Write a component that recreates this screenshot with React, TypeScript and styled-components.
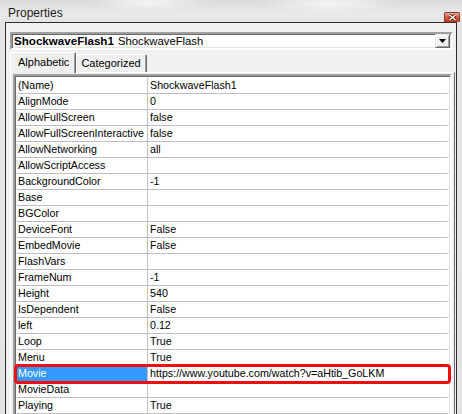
import React from 'react';
import styled, { createGlobalStyle } from 'styled-components';

interface Property {
  name: string;
  value: string;
}

const properties: Property[] = [
  { name: '(Name)', value: 'ShockwaveFlash1' },
  { name: 'AlignMode', value: '0' },
  { name: 'AllowFullScreen', value: 'false' },
  { name: 'AllowFullScreenInteractive', value: 'false' },
  { name: 'AllowNetworking', value: 'all' },
  { name: 'AllowScriptAccess', value: '' },
  { name: 'BackgroundColor', value: '-1' },
  { name: 'Base', value: '' },
  { name: 'BGColor', value: '' },
  { name: 'DeviceFont', value: 'False' },
  { name: 'EmbedMovie', value: 'False' },
  { name: 'FlashVars', value: '' },
  { name: 'FrameNum', value: '-1' },
  { name: 'Height', value: '540' },
  { name: 'IsDependent', value: 'False' },
  { name: 'left', value: '0.12' },
  { name: 'Loop', value: 'True' },
  { name: 'Menu', value: 'True' },
  { name: 'Movie', value: 'https://www.youtube.com/watch?v=aHtib_GoLKM' },
  { name: 'MovieData', value: '' },
  { name: 'Playing', value: 'True' },
];

const GlobalStyle = createGlobalStyle`
  html, body {
    margin: 0;
    padding: 0;
    background: #e3e3e3;
  }
  body {
    font-family: "Liberation Sans", Arial, sans-serif;
    font-size: 11px;
    color: #000;
  }
`;

const Window = styled.div`
  width: 462px;
  height: 414px;
  overflow: hidden;
  display: flex;
  flex-direction: column;
  padding: 0 5px 0 5px;
  box-sizing: border-box;
  background:
    radial-gradient(ellipse 60px 10px at 150px 2px, rgba(255, 255, 255, 0.7), transparent),
    radial-gradient(ellipse 70px 10px at 330px 3px, rgba(255, 255, 255, 0.7), transparent),
    linear-gradient(#dadada 0px, #e9e9e9 14px, #e4e4e4 22px, #e3e3e3 100%);
`;

const TitleBar = styled.div`
  height: 22px;
  flex: none;
  display: flex;
  justify-content: space-between;
  padding-left: 3px;
  margin-right: -3px;
`;

const Title = styled.span`
  font-size: 12px;
  line-height: 12px;
  padding-top: 7px;
  color: #1e1e1e;
`;

const CloseButton = styled.div`
  align-self: flex-end;
  width: 16px;
  height: 10px;
  box-sizing: border-box;
  border: 1px solid #8c3a2a;
  border-bottom: none;
  border-radius: 2px 2px 0 0;
  background: linear-gradient(#eaa898, #d35a40 50%, #c23a20);
  display: flex;
  align-items: center;
  justify-content: center;
`;

const Panel = styled.div`
  flex: 1;
  border: 1px solid #2e2e2e;
  border-bottom: none;
  background: #f0f0f0;
  padding: 9px 3px 0 4px;
  display: flex;
  flex-direction: column;
`;

const Combo = styled.div`
  height: 18px;
  box-sizing: border-box;
  border-style: solid;
  border-width: 2px;
  border-color: #a0a0a0 #fff #fff #a0a0a0;
  box-shadow: inset 1px 1px 0 #696969, inset -1px -1px 0 #e3e3e3;
  background: #fff;
  display: flex;
  align-items: center;
  padding-left: 2px;
  padding-right: 1px;
`;

const ComboText = styled.span`
  flex: 1;
  white-space: nowrap;
  line-height: 14px;
  font-size: 11.3px;
  b {
    font-weight: bold;
    font-size: 11.6px;
    margin-right: 4px;
  }
`;

const DropButton = styled.div`
  width: 15px;
  height: 14px;
  box-sizing: border-box;
  background: #f0f0f0;
  border-style: solid;
  border-width: 1px;
  border-color: #e3e3e3 #696969 #696969 #e3e3e3;
  box-shadow: inset 1px 1px 0 #fff, inset -1px -1px 0 #a0a0a0;
  display: flex;
  align-items: center;
  justify-content: center;
`;

const TabStrip = styled.div`
  display: flex;
  align-items: flex-end;
  margin-top: 2px;
  height: 20px;
  position: relative;
  z-index: 1;
`;

const Tab = styled.div<{ $active?: boolean }>`
  box-sizing: border-box;
  height: ${p => (p.$active ? 21 : 18)}px;
  margin-bottom: ${p => (p.$active ? -1 : 0)}px;
  padding: ${p => (p.$active ? '3px 6px 0 7px' : '2px 5px 0 4px')};
  background: #f0f0f0;
  border-style: solid;
  border-width: 1px 1px 0 1px;
  border-color: #fff #696969 transparent #fff;
  box-shadow: inset -1px 0 0 #a0a0a0;
  border-radius: 2px 2px 0 0;
  white-space: nowrap;
  line-height: 13px;
`;

const TabPage = styled.div`
  flex: 1;
  margin-right: -2px;
  border-style: solid;
  border-width: 1px 1px 0 1px;
  border-color: #fff #696969 transparent #fff;
  padding: 1px 2px 0 2px;
  display: flex;
  flex-direction: column;
`;

const Grid = styled.div`
  flex: 1;
  border-style: solid;
  border-width: 2px 2px 0 2px;
  border-color: #a0a0a0 #fff transparent #a0a0a0;
  box-shadow: inset 1px 1px 0 #696969, inset -1px 0 0 #e3e3e3;
  background: #fff;
  padding: 2px 1px 0 1px;
  font-size: 10.7px;
`;

const Row = styled.div<{ $marked?: boolean }>`
  display: grid;
  grid-template-columns: 132px 1fr;
  height: 16px;
  box-sizing: border-box;
  border-bottom: 1px solid #c0c0c0;
  position: relative;
  outline: ${p => (p.$marked ? '3px solid #f20d0d' : 'none')};
  outline-offset: -1px;
  border-radius: 2px;
  z-index: ${p => (p.$marked ? 1 : 0)};
`;

const NameCell = styled.div<{ $selected?: boolean }>`
  border-right: 1px solid #c0c0c0;
  padding-left: 2px;
  line-height: 15px;
  white-space: nowrap;
  overflow: hidden;
  background: ${p => (p.$selected ? '#3399ff' : '#fff')};
  color: ${p => (p.$selected ? '#fff' : '#000')};
`;

const ValueCell = styled.div`
  padding-left: 2px;
  line-height: 15px;
  white-space: nowrap;
  overflow: hidden;
`;

export default function App() {
  return (
    <>
      <GlobalStyle />
      <Window>
        <TitleBar>
          <Title>Properties</Title>
          <CloseButton>
            <svg width="9" height="7" viewBox="0 0 9 7">
              <path d="M1.5 1 L7.5 6 M7.5 1 L1.5 6" stroke="#5a1a10" strokeWidth="3" />
              <path d="M1.5 1 L7.5 6 M7.5 1 L1.5 6" stroke="#fff" strokeWidth="1.5" />
            </svg>
          </CloseButton>
        </TitleBar>
        <Panel>
          <Combo>
            <ComboText>
              <b>ShockwaveFlash1</b>ShockwaveFlash
            </ComboText>
            <DropButton>
              <svg width="7" height="4" viewBox="0 0 7 4">
                <path d="M0 0 H7 L3.5 4 Z" fill="#000" />
              </svg>
            </DropButton>
          </Combo>
          <TabStrip>
            <Tab $active>Alphabetic</Tab>
            <Tab>Categorized</Tab>
          </TabStrip>
          <TabPage>
            <Grid>
              {properties.map(prop => (
                <Row key={prop.name} $marked={prop.name === 'Movie'}>
                  <NameCell $selected={prop.name === 'Movie'}>{prop.name}</NameCell>
                  <ValueCell>{prop.value}</ValueCell>
                </Row>
              ))}
            </Grid>
          </TabPage>
        </Panel>
      </Window>
    </>
  );
}
